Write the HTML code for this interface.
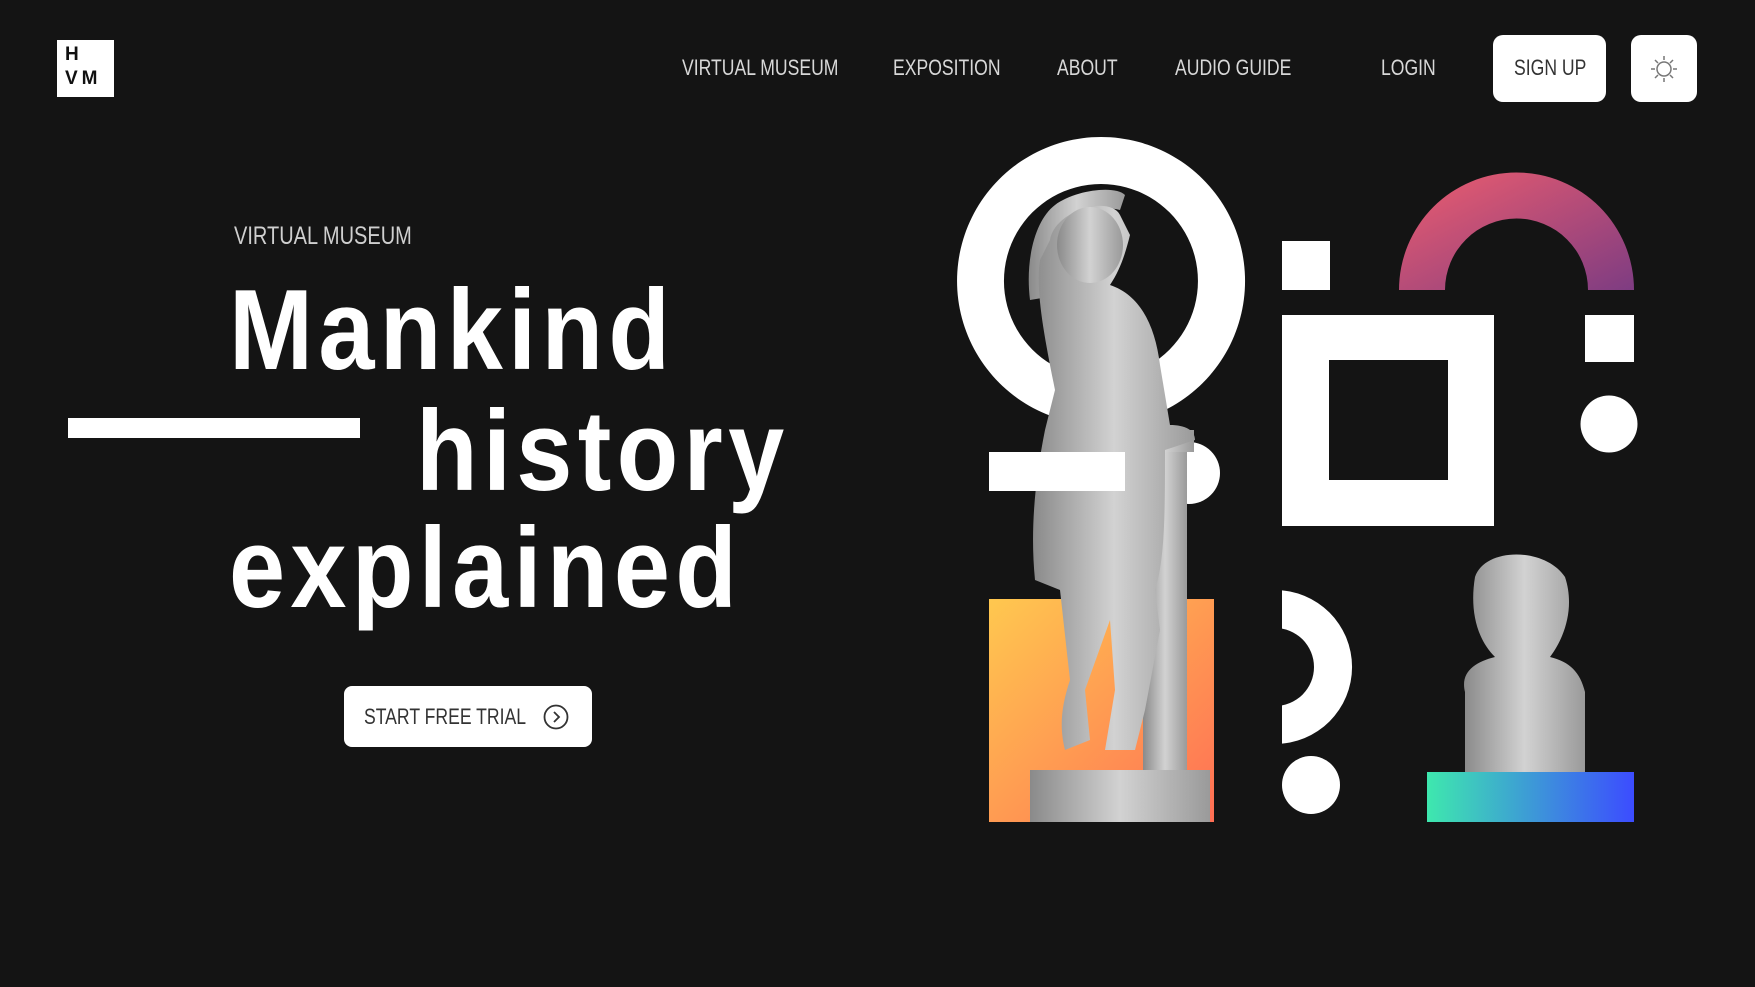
<!DOCTYPE html>
<html><head><meta charset="utf-8"><style>
*{margin:0;padding:0;box-sizing:border-box}
body{width:1755px;height:987px;background:#141414;overflow:hidden;position:relative;font-family:"Liberation Sans",sans-serif;color:#fff}
.a{position:absolute}
.nav{position:absolute;top:55px;font-size:22px;color:#d8d8d8;transform:scaleX(.8);transform-origin:left center;white-space:nowrap}
.h{position:absolute;left:229px;font-size:114px;font-weight:bold;letter-spacing:6px;line-height:1;transform:scaleX(.885);transform-origin:left top;white-space:nowrap}
</style></head><body>
<div class="a" style="left:57px;top:40px;width:57px;height:57px;background:#fff;color:#111;font-weight:bold;font-size:19px;line-height:24px;padding:3px 0 0 8px">H<br><span style="letter-spacing:4px">VM</span></div>
<div class="nav" style="left:682px">VIRTUAL MUSEUM</div>
<div class="nav" style="left:893px">EXPOSITION</div>
<div class="nav" style="left:1057px">ABOUT</div>
<div class="nav" style="left:1175px">AUDIO GUIDE</div>
<div class="nav" style="left:1381px">LOGIN</div>
<div class="a" style="left:1493px;top:35px;width:113px;height:67px;background:#fff;border-radius:10px"></div>
<div class="nav" style="left:1514px;color:#333">SIGN UP</div>
<div class="a" style="left:1631px;top:35px;width:66px;height:67px;background:#fff;border-radius:10px">
<svg width="66" height="67" viewBox="0 0 66 67"><g stroke="#777" stroke-width="1.5" fill="none"><circle cx="33" cy="34" r="7"/><path d="M33 21v4M33 43v4M20 34h4M42 34h4M24 25l3 3M39 40l3 3M24 43l3-3M39 28l3-3"/></g></svg></div>

<div class="nav" style="left:234px;top:222px;font-size:25px;color:#cfcfcf">VIRTUAL MUSEUM</div>
<div class="h" style="top:274px">Mankind</div>
<div class="h" style="top:395px;left:416px">history</div>
<div class="h" style="top:512px">explained</div>
<div class="a" style="left:68px;top:418px;width:292px;height:20px;background:#fff"></div>
<div class="a" style="left:344px;top:686px;width:248px;height:61px;background:#fff;border-radius:8px"></div>
<div class="nav" style="left:364px;top:704px;color:#333">START FREE TRIAL</div>
<svg class="a" style="left:541px;top:702px" width="30" height="30"><circle cx="15" cy="15" r="11.5" stroke="#333" stroke-width="1.8" fill="none"/><path d="M13 10l5 5-5 5" stroke="#333" stroke-width="1.8" fill="none"/></svg>

<svg class="a" style="left:0;top:0" width="1755" height="987">
<defs>
<linearGradient id="o" x1="0" y1="0" x2="1" y2="1"><stop offset="0" stop-color="#ffc84f"/><stop offset="1" stop-color="#ff6f55"/></linearGradient>
<linearGradient id="p" x1="0" y1="0" x2="1" y2="1"><stop offset="0" stop-color="#ee5d6e"/><stop offset="1" stop-color="#7e3c82"/></linearGradient>
<linearGradient id="g" x1="0" y1="0" x2="1" y2="0"><stop offset="0" stop-color="#3ee8ae"/><stop offset="1" stop-color="#3c4cff"/></linearGradient>
<linearGradient id="s" x1="0" y1="0" x2="1" y2="0"><stop offset="0" stop-color="#8a8a8a"/><stop offset=".5" stop-color="#d2d2d2"/><stop offset="1" stop-color="#9a9a9a"/></linearGradient>
<clipPath id="c"><rect x="1282" y="500" width="200" height="300"/></clipPath>
</defs>
<path fill-rule="evenodd" fill="#fff" d="M1101 137a144 144 0 1 0 0.1 0zM1101 184a97 97 0 1 1 -0.1 0z"/>
<circle cx="1189" cy="473" r="31" fill="#fff"/>
<rect x="989" y="599" width="225" height="223" fill="url(#o)"/>
<rect x="1282" y="241" width="48" height="49" fill="#fff"/>
<path fill-rule="evenodd" fill="#fff" d="M1282 315h212v211h-212zM1329 360v120h119v-120z"/>
<path fill="url(#p)" d="M1399 290a117.5 117.5 0 0 1 235 0h-46a71.5 71.5 0 0 0 -143 0z"/>
<rect x="1585" y="315" width="49" height="47" fill="#fff"/>
<circle cx="1609" cy="424" r="28.5" fill="#fff"/>
<path clip-path="url(#c)" fill-rule="evenodd" fill="#fff" d="M1275 590a77 77 0 1 1 0 154a77 77 0 1 1 0-154zM1275 628a39 39 0 1 0 0 78a39 39 0 1 0 0-78z"/>
<circle cx="1311" cy="785" r="29" fill="#fff"/>
<g fill="url(#s)">
<rect x="1143" y="440" width="44" height="340"/>
<rect x="1136" y="430" width="58" height="22"/>
<path d="M1030 770h180v52h-180z"/>
<path d="M1030 300c-5-40 5-80 25-95 20-15 60-20 70-10l-5 15c-20-5-45 0-55 15-8 15-10 40-5 70z"/>
<path d="M1050 240c5-30 60-45 70-25l10 20c-5 20-10 35-20 50 30 10 45 40 50 80l10 60c15 0 25 5 25 15l-30 10c0 60 0 110-10 140l5 40-15 80-10 40h-30l10-60-5-70-25 70 5 50-25 10c-5-20-5-40 5-70l-10-90-25-10c-5-50 0-100 10-150l10-40c-10-50-20-100-15-130z"/>
<ellipse cx="1090" cy="245" rx="33" ry="38"/>
<path d="M1465 772v-80c-5-20 10-30 30-35-20-20-25-50-20-80 10-30 70-30 90 0 10 30 0 60-15 80 20 5 30 15 35 35v80z"/>
</g>
<rect x="989" y="452" width="136" height="39" fill="#fff"/>
<rect x="1427" y="772" width="207" height="50" fill="url(#g)"/>
</svg>
</body></html>
